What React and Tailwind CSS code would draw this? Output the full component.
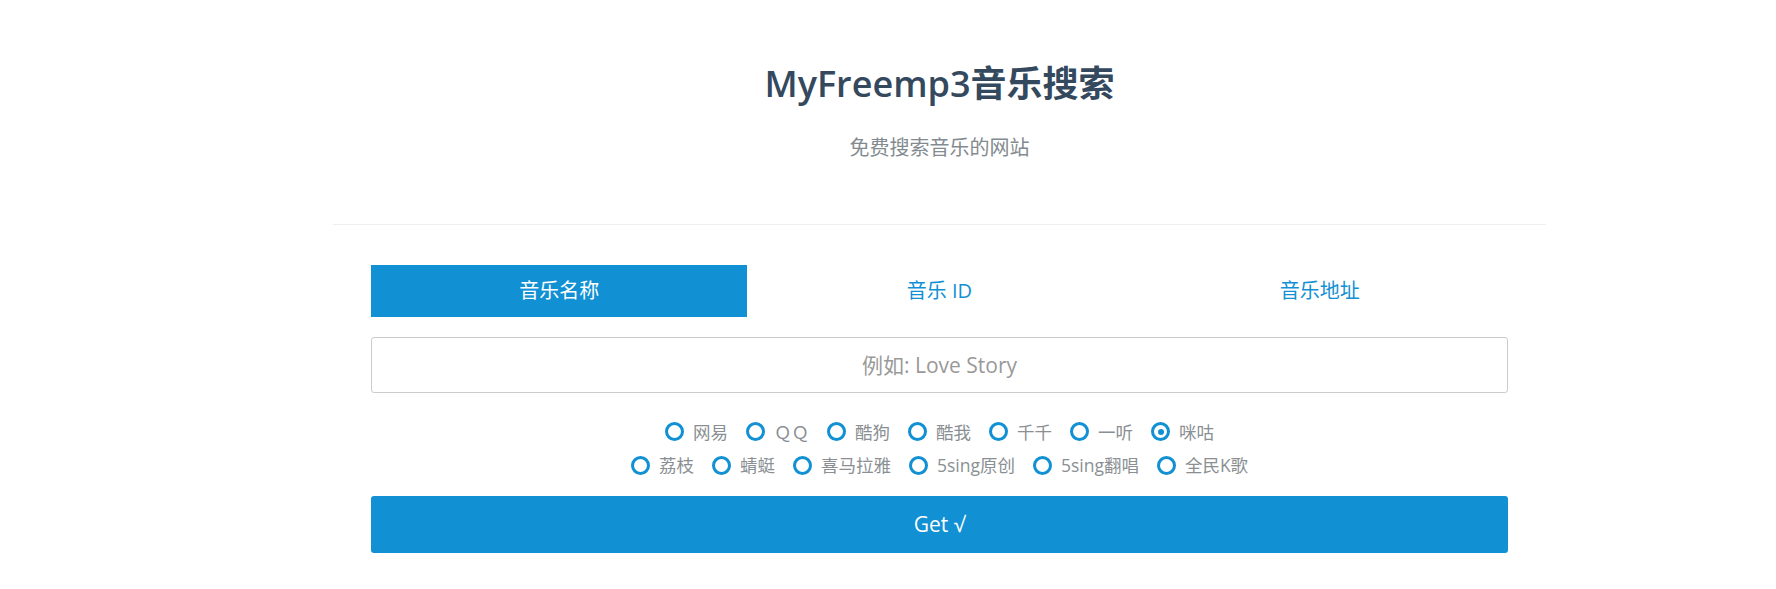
import React, { useState } from 'react';

const sources = [
    ['网易', 'ＱＱ', '酷狗', '酷我', '千千', '一听', '咪咕'],
    ['荔枝', '蜻蜓', '喜马拉雅', '5sing原创', '5sing翻唱', '全民K歌'],
];

const tabs = ['音乐名称', '音乐 ID', '音乐地址'];

function Radio({ label, checked, onPick }) {
    return (
        <label className="flex items-center cursor-pointer" onClick={onPick}>
            <span className="w-[19px] h-[19px] rounded-full border-[3px] border-[#1190d3] bg-white flex items-center justify-center">
                {checked && <span className="w-[6px] h-[6px] rounded-full bg-[#1190d3]" />}
            </span>
            <span className="ml-[9px] text-[17.5px] text-[#8a8f93]">{label}</span>
        </label>
    );
}

export default function App() {
    const [tab, setTab] = useState(0);
    const [source, setSource] = useState('咪咕');

    return (
        <div className="bg-white min-h-[589px]" style={{ fontFamily: '"Open Sans", "Noto Sans CJK SC", sans-serif' }}>
            <div className="ml-[333px] w-[1213px]">
                <header className="pt-[64px] pb-[61px] text-center">
                    <h1 className="text-[36px] leading-[40px] text-[#34495e]">
                        <span className="font-semibold">MyFreemp3</span>
                        <span className="font-bold">音乐搜索</span>
                    </h1>
                    <p className="mt-[29px] text-[20px] leading-[30px] text-[#838b90]">免费搜索音乐的网站</p>
                </header>

                <hr className="border-0 border-t border-[#eeeeee]" />

                <section className="px-[38px] pt-[40px]">
                    <div className="grid grid-cols-3 gap-[4px]">
                        {tabs.map((t, i) =>
                            <button
                                key={t}
                                onClick={() => setTab(i)}
                                className={`h-[52px] text-[20px] ${tab === i ? 'bg-[#1190d3] text-white' : 'bg-white text-[#1190d3]'}`}
                            >
                                {t}
                            </button>
                        )}
                    </div>

                    <input
                        className="mt-[20px] w-full h-[56px] border border-[#cccccc] rounded-[3px] text-center text-[21px] text-[#555] placeholder:text-[#999] outline-none"
                        placeholder="例如: Love Story"
                    />

                    <div className="mt-[22px] flex flex-col items-center">
                        {sources.map((row, r) =>
                            <div key={r} className="flex items-center justify-center gap-x-[18px] h-[33.5px]">
                                {row.map(s =>
                                    <Radio key={s} label={s} checked={source === s} onPick={() => setSource(s)} />
                                )}
                            </div>
                        )}
                    </div>

                    <button className="mt-[14px] w-full h-[57px] bg-[#1190d3] rounded-[3px] text-white text-[21px]">
                        Get √
                    </button>
                </section>
            </div>
        </div>
    );
}
